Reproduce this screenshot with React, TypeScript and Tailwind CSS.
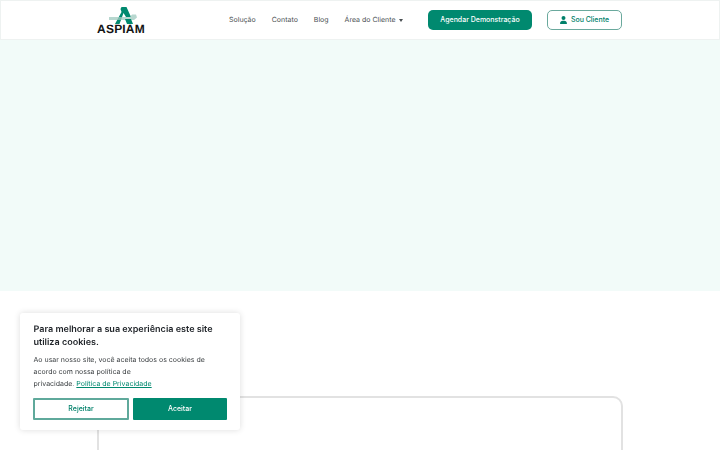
const navLinks = ['Solução', 'Contato', 'Blog'];

function Logo() {
  return (
    <div className="flex w-[50px] flex-col items-center pt-[1px]">
      <svg width="40" height="19" viewBox="0 0 40 19" className="mb-[-0.5px]">
        <path d="M14 18 L20.5 6 L19.5 3 L20.5 1 L25.5 1 L30 11 L25 11 L22.5 7 L18.5 18 Z" fill="#00896f" />
        <path d="M8 11 H29 L31 8.5 H35 L36 11.5 L33 14 H8 Z" fill="#9fc9bf" opacity="0.75" />
        <path d="M24 13 H30 L32 18 H26 Z" fill="#00896f" />
      </svg>
      <span className="font-['Liberation_Sans',sans-serif] text-[12px] font-bold leading-[11px] tracking-[0.2px] text-[#141414]">
        ASPIAM
      </span>
    </div>
  );
}

function UserIcon() {
  return (
    <svg width="7" height="8" viewBox="0 0 448 512" fill="#00806a">
      <path d="M224 256a128 128 0 1 0 0-256 128 128 0 1 0 0 256zm-45.7 48C79.8 304 0 383.8 0 482.3 0 498.7 13.3 512 29.7 512h388.6c16.4 0 29.7-13.3 29.7-29.7C448 383.8 368.2 304 269.7 304h-91.4z" />
    </svg>
  );
}

function CookieBanner() {
  return (
    <div className="fixed bottom-[20px] left-[20px] flex h-[117px] w-[220px] flex-col rounded-[3px] bg-white px-[13px] pt-[11px] shadow-[0_0_6px_rgba(0,0,0,0.14)]">
      <p className="pl-[0.5px] text-[9.05px] font-semibold leading-[12.5px] text-[#1f2328]">
        Para melhorar a sua experiência este site utiliza cookies.
      </p>
      <p className="mt-[5px] pl-[0.5px] text-[7px] leading-[12px] text-[#3c4043]">
        Ao usar nosso site, você aceita todos os cookies de
        <br />
        acordo com nossa política de
        <br />
        privacidade. <a className="text-[#00896f] underline">Política de Privacidade</a>
      </p>
      <div className="mt-[8px] flex gap-[4px]">
        <button className="h-[22px] w-[96px] rounded-[1px] border-2 border-[#5fa99b] bg-white text-[7px] font-medium text-[#00806a]">
          Rejeitar
        </button>
        <button className="h-[22px] w-[94px] rounded-[1px] bg-[#00896f] text-[7px] font-medium text-white">
          Aceitar
        </button>
      </div>
    </div>
  );
}

export default function App() {
  return (
    <div className="h-[450px] w-[720px] overflow-hidden bg-white font-['Inter',sans-serif] [text-rendering:geometricPrecision]">
      <header className="flex h-[40px] items-center border border-[#eef2f1] bg-white pl-[96px] pr-[97px]">
        <Logo />
        <nav className="ml-[84px] flex w-[176px] shrink-0 items-center gap-[16px] whitespace-nowrap text-[7px] text-[#4a4f52]">
          {navLinks.map((link) => (
            <a key={link}>{link}</a>
          ))}
          <a className="flex items-center gap-[4px]">
            Área do Cliente
            <span className="h-0 w-0 border-x-[2.5px] border-t-[3px] border-x-transparent border-t-[#4a4f52]" />
          </a>
        </nav>
        <button className="ml-[23px] h-[20px] w-[104px] shrink-0 rounded-[5px] bg-[#00896f] text-[7px] font-medium text-white">
          Agendar Demonstração
        </button>
        <button className="ml-[15px] flex h-[20px] w-[75px] shrink-0 items-center justify-center gap-[4px] rounded-[5px] border border-[#6aa99d] bg-white text-[7px] font-medium text-[#00806a]">
          <UserIcon />
          Sou Cliente
        </button>
      </header>
      <section className="h-[251px] bg-[#f2fbf9]" />
      <section className="pl-[97px] pt-[105px]">
        <div className="h-[200px] w-[526px] rounded-[10px] border-2 border-[#e2e2e2] bg-white" />
      </section>
      <CookieBanner />
    </div>
  );
}
